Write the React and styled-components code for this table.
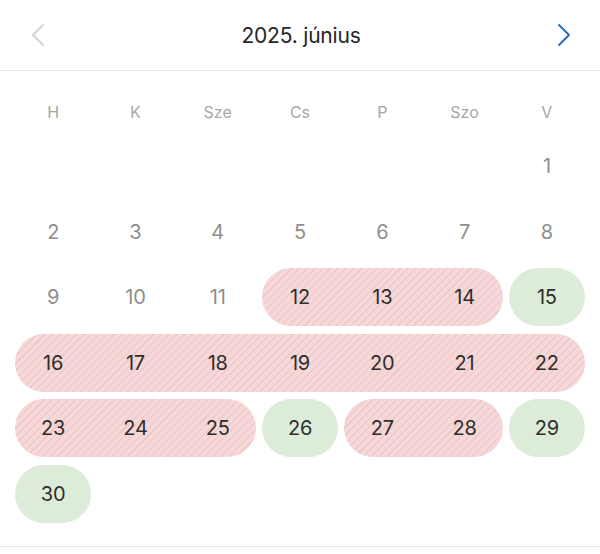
import React from "react";
import styled, { createGlobalStyle } from "styled-components";

const Global = createGlobalStyle`
  html, body { margin: 0; padding: 0; background: #ffffff; }
  body { font-family: Inter, "Noto Sans", "Liberation Sans", sans-serif; }
`;

const Page = styled.div`
  width: 600px;
  height: 554px;
  background: #ffffff;
  display: flex;
  flex-direction: column;
  overflow: hidden;
`;

const Header = styled.div`
  height: 70px;
  display: flex;
  align-items: center;
  justify-content: space-between;
  padding: 0 22px 0 24px;
  border-bottom: 1px solid #e6e6e6;
`;

const NavButton = styled.button`
  width: 28px;
  height: 28px;
  display: flex;
  align-items: center;
  justify-content: center;
  padding: 0;
  border: none;
  background: none;
  color: ${(p) => (p.$active ? "#2d6bc3" : "#d4d4d4")};
`;

const Title = styled.div`
  font-size: 21px;
  font-weight: 400;
  color: #262626;
  letter-spacing: -0.2px;
`;

const Body = styled.div`
  padding: 28px 12px 23.5px;
  border-bottom: 1px solid #e6e6e6;
`;

const WeekdayRow = styled.div`
  display: grid;
  grid-template-columns: repeat(7, 1fr);
  height: 26px;
  margin-bottom: 12px;
`;

const Weekday = styled.div`
  display: flex;
  align-items: center;
  justify-content: center;
  font-size: 16px;
  font-weight: 400;
  color: #a6a6a6;
`;

const Weeks = styled.div`
  display: flex;
  flex-direction: column;
  gap: 7.5px;
`;

const Week = styled.div`
  display: grid;
  grid-template-columns: repeat(7, 1fr);
  grid-template-rows: 58px;
`;

const Pill = styled.div`
  grid-row: 1;
  grid-column: ${(p) => p.$start} / ${(p) => p.$end};
  margin: 0 3px;
  border-radius: 29px;
  background: ${(p) =>
    p.$kind === "busy"
      ? "repeating-linear-gradient(135deg, #f6d8d8 0px, #f6d8d8 4px, #efcaca 4px, #efcaca 5.5px)"
      : "#dcecd9"};
`;

const Day = styled.div`
  grid-row: 1;
  grid-column: ${(p) => p.$col};
  display: flex;
  align-items: center;
  justify-content: center;
  font-size: 20px;
  font-weight: 400;
  letter-spacing: -0.2px;
  color: ${(p) => (p.$marked ? "#2e2e2e" : "#8e8e8e")};
  position: relative;
  z-index: 1;
`;

const Footer = styled.div`
  flex: 1;
`;

const weekdays = ["H", "K", "Sze", "Cs", "P", "Szo", "V"];

const weeks = [
  { days: [null, null, null, null, null, null, 1], pills: [] },
  { days: [2, 3, 4, 5, 6, 7, 8], pills: [] },
  {
    days: [9, 10, 11, 12, 13, 14, 15],
    pills: [
      { start: 4, end: 7, kind: "busy" },
      { start: 7, end: 8, kind: "free" },
    ],
  },
  {
    days: [16, 17, 18, 19, 20, 21, 22],
    pills: [{ start: 1, end: 8, kind: "busy" }],
  },
  {
    days: [23, 24, 25, 26, 27, 28, 29],
    pills: [
      { start: 1, end: 4, kind: "busy" },
      { start: 4, end: 5, kind: "free" },
      { start: 5, end: 7, kind: "busy" },
      { start: 7, end: 8, kind: "free" },
    ],
  },
  {
    days: [30, null, null, null, null, null, null],
    pills: [{ start: 1, end: 2, kind: "free" }],
  },
];

const isMarked = (week, col) =>
  week.pills.some((p) => col >= p.start && col < p.end);

const Chevron = ({ dir }) => (
  <svg width="14" height="24" viewBox="0 0 14 24" fill="none">
    <path
      d={dir === "left" ? "M12 2 L2 12 L12 22" : "M2 2 L12 12 L2 22"}
      stroke="currentColor"
      strokeWidth="2"
      strokeLinecap="round"
      strokeLinejoin="round"
    />
  </svg>
);

export default function App() {
  return (
    <Page>
      <Global />
      <Header>
        <NavButton aria-label="Előző hónap">
          <Chevron dir="left" />
        </NavButton>
        <Title>2025. június</Title>
        <NavButton $active aria-label="Következő hónap">
          <Chevron dir="right" />
        </NavButton>
      </Header>
      <Body>
        <WeekdayRow>
          {weekdays.map((w) => (
            <Weekday key={w}>{w}</Weekday>
          ))}
        </WeekdayRow>
        <Weeks>
          {weeks.map((week, wi) => (
            <Week key={wi}>
              {week.pills.map((p, pi) => (
                <Pill key={pi} $start={p.start} $end={p.end} $kind={p.kind} />
              ))}
              {week.days.map((d, di) =>
                d == null ? null : (
                  <Day key={di} $col={di + 1} $marked={isMarked(week, di + 1)}>
                    {d}
                  </Day>
                )
              )}
            </Week>
          ))}
        </Weeks>
      </Body>
      <Footer />
    </Page>
  );
}
